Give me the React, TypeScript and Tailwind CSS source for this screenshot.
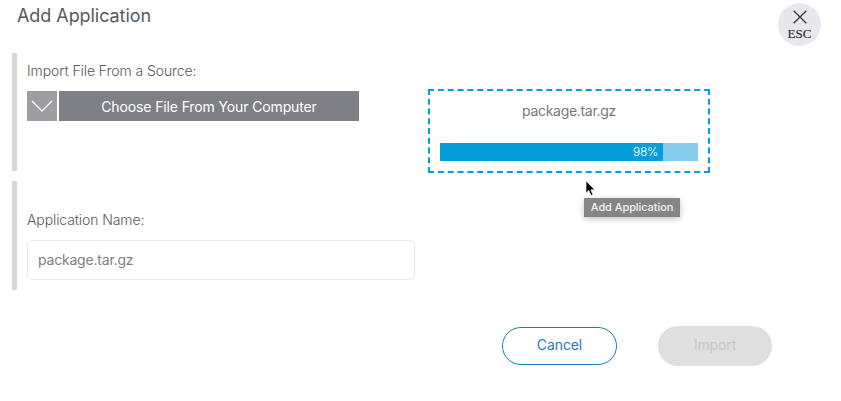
function EscButton() {
  return (
    <button className="mt-[3px] mr-5 flex h-[43px] w-[43px] flex-col items-center rounded-full bg-[#e8e7ec] pt-[7px] text-[#343438]">
      <svg width="14" height="14" viewBox="0 0 14 14" fill="none" stroke="currentColor" strokeWidth="1.3">
        <path d="M.7.7l12.6 12.6M13.3.7L.7 13.3" />
      </svg>
      <span className="mt-[3px] font-['Liberation_Serif',serif] text-[13px] leading-[14px] [-webkit-text-stroke:0.2px_currentColor]">ESC</span>
    </button>
  );
}

function UploadBox() {
  return (
    <div className="relative h-[84px] w-[282px] border-2 border-dashed border-[#049fd9] px-[10px]">
      <p className="mt-[10px] text-center text-[14px] leading-5 font-normal tracking-[-0.3px] text-[#77787b]">package.tar.gz</p>
      <div className="mt-[22px] h-[18px] bg-[#86cceb]">
        <div className="h-full w-[223px] bg-[#049fd9] pr-[5px] text-right text-[12px] leading-[18px] tracking-[-0.3px] text-white">98%</div>
      </div>
      <svg className="absolute top-[89px] left-[155px]" width="12" height="17" viewBox="0 0 12 17">
        <path d="M1 .8v12.4l2.8-2.7 2.2 5 2-.9-2.1-4.8h3.9z" fill="#000" stroke="#fff" strokeWidth=".7" />
      </svg>
      <div className="absolute top-[107px] left-[154px] h-[19px] w-[96px] bg-[#858585] text-center text-[11px] leading-[19px] font-medium tracking-[-0.08px] whitespace-nowrap text-[#f2f2f2] shadow-[0_2px_6px_rgba(0,0,0,0.25)]">
        Add Application
      </div>
    </div>
  );
}

export default function App() {
  return (
    <main className="flex h-[401px] w-[841px] flex-col overflow-hidden bg-white font-['Inter',sans-serif] font-light text-[#58585b]">
      <header className="flex h-[53px] items-start justify-between">
        <h1 className="mt-1 ml-[17px] text-[18px] leading-6 font-normal tracking-[-0.06px]">Add Application</h1>
        <EscButton />
      </header>
      <div className="flex">
        <div className="ml-3 flex w-[416px] flex-col gap-[10px]">
          <section className="h-[118px] border-l-[5px] border-[#d8d8d8] pl-[10px]">
            <p className="pt-2 text-[14px] leading-5 tracking-[-0.08px]">Import File From a Source:</p>
            <div className="mt-[10px] flex h-[30px] gap-[2px] text-white">
              <button className="flex w-[30px] items-center justify-center bg-[#9e9ea2]">
                <svg width="22" height="12" viewBox="0 0 22 12" fill="none" stroke="currentColor" strokeWidth="1.4">
                  <path d="M1 1l10 10L21 1" />
                </svg>
              </button>
              <button className="w-[300px] bg-[#7f7f86] text-[14px] font-normal tracking-[-0.13px]">Choose File From Your Computer</button>
            </div>
          </section>
          <section className="h-[109px] border-l-[5px] border-[#d8d8d8] pl-[10px]">
            <p className="pt-[29px] text-[14px] leading-5 tracking-[-0.1px]">Application Name:</p>
            <div className="mt-[10px] h-10 w-[388px] rounded-[5px] border border-[#e8e8e8] pl-[10px] text-[14px] leading-[38px] font-normal tracking-[-0.2px] text-[#808080]">
              package.tar.gz
            </div>
          </section>
        </div>
        <div className="pt-9">
          <UploadBox />
        </div>
      </div>
      <footer className="mt-[36px] flex items-center gap-[41px] pl-[502px] text-[14px] font-normal">
        <button className="h-[38px] w-[115px] rounded-full border border-[#1f7bb6] pb-[4px] tracking-[-0.1px] text-[#1f7bb6]">Cancel</button>
        <button className="h-10 w-[114px] rounded-full bg-[#dfdfdf] pb-[4px] tracking-[-0.1px] text-[#c6c7ca]">Import</button>
      </footer>
    </main>
  );
}
